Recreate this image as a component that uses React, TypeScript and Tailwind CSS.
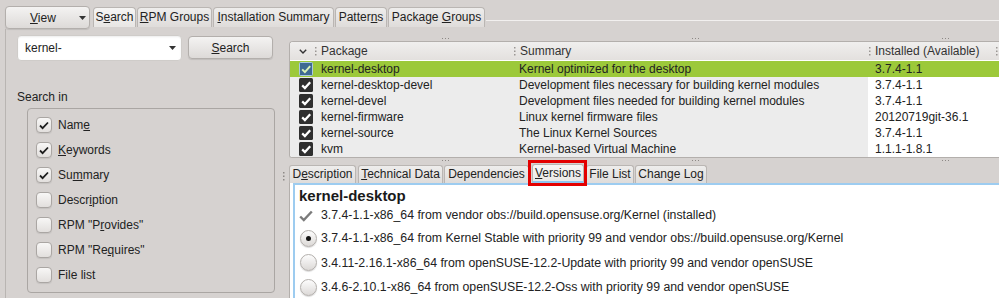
import type { ReactNode } from "react";

const rows = [
  { name: "kernel-desktop", summary: "Kernel optimized for the desktop", version: "3.7.4-1.1", selected: true },
  { name: "kernel-desktop-devel", summary: "Development files necessary for building kernel modules", version: "3.7.4-1.1" },
  { name: "kernel-devel", summary: "Development files needed for building kernel modules", version: "3.7.4-1.1" },
  { name: "kernel-firmware", summary: "Linux kernel firmware files", version: "20120719git-36.1" },
  { name: "kernel-source", summary: "The Linux Kernel Sources", version: "3.7.4-1.1" },
  { name: "kvm", summary: "Kernel-based Virtual Machine", version: "1.1.1-1.8.1" },
];

// little splitter handles
function HDots() {
  return (
    <svg width="8" height="1" className="block">
      <rect x="0" y="0" width="1" height="1" fill="#8d8986" />
      <rect x="3" y="0" width="1" height="1" fill="#8d8986" />
      <rect x="6" y="0" width="1" height="1" fill="#8d8986" />
    </svg>
  );
}

function VDots({ color = "#8d8986" }: { color?: string }) {
  return (
    <svg width="2" height="9" className="block shrink-0">
      <rect x="0" y="0" width="1.5" height="1.5" fill={color} />
      <rect x="0" y="3.5" width="1.5" height="1.5" fill={color} />
      <rect x="0" y="7" width="1.5" height="1.5" fill={color} />
    </svg>
  );
}

function RowCheck({ selected }: { selected?: boolean }) {
  if (selected) {
    return (
      <svg width="14" height="14" className="block">
        <rect x="0.5" y="0.5" width="13" height="13" rx="1" fill="#3f6a92" stroke="#a9c9e2" />
        <path d="M3.2 7.4l2.7 2.7L11.2 4.2" stroke="#d9f1b8" strokeWidth="2" fill="none" />
      </svg>
    );
  }
  return (
    <svg width="14" height="14" className="block">
      <rect x="0" y="0" width="14" height="14" rx="1.5" fill="#2f2f2f" />
      <path d="M3.2 7.4l2.7 2.7L11.2 4.2" stroke="#ffffff" strokeWidth="2.2" fill="none" />
    </svg>
  );
}

function Check({ checked, children }: { checked?: boolean; children: ReactNode }) {
  return (
    <div className="flex h-[25px] items-center">
      <div className="flex h-[16px] w-[16px] items-center justify-center rounded-[4px] border border-[#aaa6a3] bg-gradient-to-b from-[#f8f7f6] to-[#e2dfdd] shadow-[0_1px_1px_rgba(0,0,0,0.08)]">
        {checked && (
          <svg width="12" height="12" className="block">
            <path d="M2 6.5l2.6 2.6L10 3.5" stroke="#1d1d1d" strokeWidth="1.8" fill="none" />
          </svg>
        )}
      </div>
      <span className="ml-[6px]">{children}</span>
    </div>
  );
}

function TopTab({ className, children }: { className: string; children: ReactNode }) {
  return (
    <div
      className={`h-[20px] rounded-t-[4px] border border-b-0 border-[#bab6b3] text-center leading-[19px] ${className}`}
    >
      {children}
    </div>
  );
}

function Radio({ checked, children }: { checked?: boolean; children: ReactNode }) {
  return (
    <div className="flex h-[24.5px] items-center">
      <div className="ml-[1px] flex h-[17px] w-[17px] items-center justify-center rounded-full border border-[#b3afac] bg-gradient-to-b from-[#fdfdfd] to-[#dcd9d7] shadow-[0_1px_1px_rgba(0,0,0,0.15)]">
        {checked && <div className="h-[5px] w-[5px] rounded-full bg-[#151515]" />}
      </div>
      <span className="ml-[4px]">{children}</span>
    </div>
  );
}

export default function App() {
  return (
    <div className="flex h-[298px] w-[999px] flex-col overflow-hidden bg-[#d6d2d0] font-['Liberation_Sans',Arial,sans-serif] text-[12px] text-[#222]">
      {/* top: view button and tabs */}
      <div className="flex h-[29px] shrink-0 items-start pl-[5px] pt-[6px]">
        <button className="flex h-[23px] w-[85px] items-center rounded-[4px] border border-[#b3afac] bg-gradient-to-b from-[#f4f3f2] to-[#dddad8] pl-[24px] pr-[3px] shadow-[0_1px_1px_rgba(0,0,0,0.1)]">
          <span className="flex-1 text-left">
            <u>V</u>iew
          </span>
          <svg width="7" height="4" className="block">
            <path d="M0 0h7L3.5 4z" fill="#333" />
          </svg>
        </button>
        <div className="ml-[3px] mt-[1px] flex gap-[1px]">
          <TopTab className="w-[43px] bg-gradient-to-b from-[#f6f5f4] to-[#e8e6e4]">
            S<u>e</u>arch
          </TopTab>
          <TopTab className="w-[75px] bg-gradient-to-b from-[#eeedec] to-[#dfdcda]">
            <u>R</u>PM Groups
          </TopTab>
          <TopTab className="w-[121px] bg-gradient-to-b from-[#eeedec] to-[#dfdcda]">
            <u>I</u>nstallation Summary
          </TopTab>
          <TopTab className="w-[52px] bg-gradient-to-b from-[#eeedec] to-[#dfdcda]">
            Patter<u>n</u>s
          </TopTab>
          <TopTab className="w-[97px] bg-gradient-to-b from-[#eeedec] to-[#dfdcda]">
            Package <u>G</u>roups
          </TopTab>
        </div>
        <div className="ml-px mt-[14px] h-px flex-1 bg-[#f2f0ef]" />
      </div>

      <div className="flex min-h-0 flex-1">
        {/* left search pane */}
        <div className="ml-[5px] w-[278px] shrink-0 border-l border-[#b9b5b2] pl-[11px] pt-[6px]">
          <div className="flex items-start">
            <div className="flex h-[26px] w-[165px] items-center rounded-[4px] border border-[#cfccc9] bg-white pl-[7px] pr-[5px] shadow-[inset_0_1px_2px_rgba(0,0,0,0.08)]">
              <span className="flex-1">kernel-</span>
              <svg width="7" height="4" className="block">
                <path d="M0 0h7L3.5 4z" fill="#333" />
              </svg>
            </div>
            <button className="ml-[6px] mt-[1px] h-[23px] w-[85px] rounded-[4px] border border-[#b3afac] bg-gradient-to-b from-[#f4f3f2] to-[#dddad8] text-center shadow-[0_1px_1px_rgba(0,0,0,0.1)]">
              <u>S</u>earch
            </button>
          </div>
          <div className="mt-[29px] leading-[14px]">Search in</div>
          <div className="ml-[10px] mt-[4px] h-[185px] w-[248px] rounded-[4px] border border-[#aaa6a3] pl-[8px] pt-[3px]">
            <Check checked>
              Nam<u>e</u>
            </Check>
            <Check checked>
              <u>K</u>eywords
            </Check>
            <Check checked>
              Su<u>m</u>mary
            </Check>
            <Check>
              Descr<u>i</u>ption
            </Check>
            <Check>
              RPM "P<u>r</u>ovides"
            </Check>
            <Check>
              RPM "Re<u>q</u>uires"
            </Check>
            <Check>File list</Check>
          </div>
        </div>

        {/* splitter */}
        <div className="w-[6px] shrink-0 pt-[143px]">
          <VDots />
        </div>

        {/* right column */}
        <div className="flex min-w-0 flex-1 flex-col">
          <div className="flex h-[12px] shrink-0 items-start pt-[9px]">
            <div className="w-[153px]" />
            <HDots />
            <div className="w-[242px]" />
            <HDots />
            <div className="w-[242px]" />
            <HDots />
          </div>

          {/* package table */}
          <div className="h-[117px] shrink-0 overflow-hidden rounded-tl-[4px] rounded-bl-[3px] border-y border-l border-[#b3afac] bg-white">
            <div className="flex h-[19px] items-center border-b border-white bg-gradient-to-b from-[#f0efee] to-[#e3e0de] text-[#333]">
              <div className="w-[24px] pl-[9px]">
                <svg width="8" height="5" className="block">
                  <path d="M0.8 0.8L4 4l3.2-3.2" stroke="#333" strokeWidth="1.4" fill="none" />
                </svg>
              </div>
              <div className="flex w-[199px] items-center pl-[1px]">
                <VDots color="#9a9693" />
                <span className="ml-[4px]">Package</span>
              </div>
              <div className="flex w-[355px] items-center pl-[1px]">
                <VDots color="#9a9693" />
                <span className="ml-[4px]">Summary</span>
              </div>
              <div className="flex w-[127px] items-center pl-[1px]">
                <VDots color="#9a9693" />
                <span className="ml-[4px]">Installed (Available)</span>
              </div>
              <div className="flex flex-1 items-center pl-[1px]">
                <VDots color="#9a9693" />
              </div>
            </div>
            {rows.map((r) => (
              <div
                key={r.name}
                className={`flex h-[16px] items-center ${r.selected ? "bg-[#9cc93a]" : "bg-[#ececec]"}`}
              >
                <div className="w-[24px] pl-[9px]">
                  <RowCheck selected={r.selected} />
                </div>
                <div className="w-[199px] pl-[7px]">{r.name}</div>
                <div className="w-[355px] pl-[6px]">{r.summary}</div>
                <div className={`flex h-full flex-1 items-center pl-[7px] ${r.selected ? "" : "bg-white"}`}>
                  {r.version}
                </div>
              </div>
            ))}
          </div>

          <div className="flex h-[6px] shrink-0 items-start pt-[2px]">
            <div className="w-[153px]" />
            <HDots />
            <div className="w-[242px]" />
            <HDots />
            <div className="w-[242px]" />
            <HDots />
          </div>

          {/* detail tabs */}
          <div className="relative flex h-[19px] shrink-0 items-end">
            <div className="h-[18px] w-[67px] rounded-t-[3px] border border-b-0 border-[#bab6b3] bg-gradient-to-b from-[#eeedec] to-[#dfdcda] text-center leading-[17px]">
              D<u>e</u>scription
            </div>
            <div className="ml-[2px] h-[18px] w-[85px] rounded-t-[3px] border border-b-0 border-[#bab6b3] bg-gradient-to-b from-[#eeedec] to-[#dfdcda] text-center leading-[17px]">
              <u>T</u>echnical Data
            </div>
            <div className="ml-[1px] h-[18px] w-[85px] rounded-t-[3px] border border-b-0 border-[#bab6b3] bg-gradient-to-b from-[#eeedec] to-[#dfdcda] text-center leading-[17px]">
              Dependencies
            </div>
            <div className="ml-[3px] h-[19px] w-[52px] rounded-t-[3px] border border-b-2 border-[#bab6b3] border-b-[#8fc4ee] bg-gradient-to-b from-[#f7f6f5] to-[#eae8e6] text-center leading-[16px]">
              <u>V</u>ersions
            </div>
            <div className="ml-[2px] h-[18px] w-[48px] rounded-t-[3px] border border-b-0 border-[#bab6b3] bg-gradient-to-b from-[#eeedec] to-[#dfdcda] text-center leading-[17px]">
              File List
            </div>
            <div className="ml-[1px] h-[18px] w-[72px] rounded-t-[3px] border border-b-0 border-[#bab6b3] bg-gradient-to-b from-[#eeedec] to-[#dfdcda] text-center leading-[17px]">
              Change Log
            </div>
            <div className="absolute left-[239px] top-[-4px] h-[26px] w-[59px] border-[3px] border-[#e30000]" />
          </div>

          {/* versions content */}
          <div className="min-h-0 flex-1 border-l border-[#b3afac] bg-white">
            <div className="ml-[3px] h-full border-l-2 border-t-2 border-[#9dccf0] pl-[4px] pt-[1px] text-[12.3px]">
              <div className="h-[20px] text-[15px] font-bold leading-[20px] text-[#1a1a1a]">kernel-desktop</div>
              <div className="flex h-[19px] items-center">
                <svg width="14" height="12" className="block">
                  <path d="M1.2 6.5l3.6 3.6L12.8 1.5" stroke="#7b7b7b" strokeWidth="2.4" fill="none" />
                </svg>
                <span className="ml-[8px]">3.7.4-1.1-x86_64 from vendor obs://build.opensuse.org/Kernel (installed)</span>
              </div>
              <div className="mt-[1px]">
                <Radio checked>
                  3.7.4-1.1-x86_64 from Kernel Stable with priority 99 and vendor obs://build.opensuse.org/Kernel
                </Radio>
                <Radio>3.4.11-2.16.1-x86_64 from openSUSE-12.2-Update with priority 99 and vendor openSUSE</Radio>
                <Radio>3.4.6-2.10.1-x86_64 from openSUSE-12.2-Oss with priority 99 and vendor openSUSE</Radio>
              </div>
            </div>
          </div>
        </div>
      </div>
    </div>
  );
}
